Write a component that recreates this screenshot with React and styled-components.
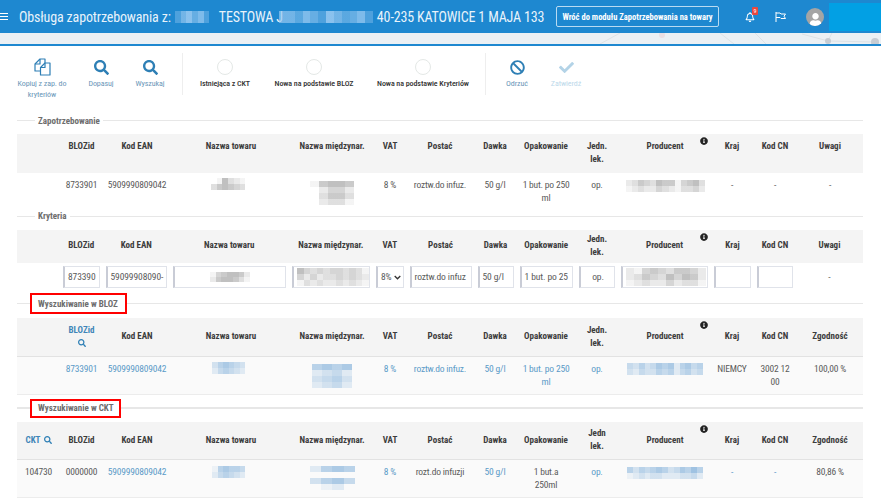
import React from 'react';
import styled, { createGlobalStyle } from 'styled-components';
import { FaSearch, FaBan, FaCheck, FaRegBell, FaInfoCircle, FaUser } from 'react-icons/fa';

const colors = {
    blue: '#1e88d0',
    link: '#5b9ac8',
    icon: '#2e7fb5',
    text: '#5a5a5a',
    head: '#3c3c3c',
    line: '#e7e7e7',
    gray: '#f4f4f4',
};

const GlobalStyle = createGlobalStyle`
    html, body { margin: 0; padding: 0; background: #fff; }
    body {
        font-family: Roboto, "Liberation Sans", sans-serif;
        font-size: 9.5px;
        font-stretch: 85%;
        color: ${colors.text};
        overflow: hidden;
    }
`;

const Page = styled.div`
    width: 881px;
    height: 502px;
    overflow: hidden;
`;

const TopBar = styled.header`
    display: flex;
    align-items: center;
    height: 33px;
    background: ${colors.blue};
    color: #e8f3fb;
`;

const Burger = styled.span`
    flex: none;
    display: block;
    width: 8px;
    height: 5px;
    margin: 0 11px 0 0;
    border-top: 1px solid #fff;
    border-bottom: 1px solid #fff;
    position: relative;
    &::after {
        content: '';
        position: absolute;
        left: 0;
        right: 0;
        top: 2px;
        height: 1px;
        background: #fff;
    }
`;

const Title = styled.div`
    flex: none;
    display: flex;
    align-items: center;
    gap: 4px;
    width: 537px;
    font-size: 14px;
    letter-spacing: -0.15px;
    white-space: nowrap;
`;

const TitleCover = styled.span`
    display: flex;
    margin-left: -8px;
`;

const BackButton = styled.div`
    flex: none;
    box-sizing: border-box;
    width: 163px;
    height: 21px;
    border: 1px solid #b9dbf2;
    border-radius: 2px;
    color: #fff;
    font-weight: 700;
    font-size: 8.5px;
    display: flex;
    align-items: center;
    justify-content: center;
    white-space: nowrap;
`;

const TopIcons = styled.div`
    flex: none;
    display: flex;
    align-items: center;
    gap: 20px;
    margin-left: 26px;
    color: #fff;
    font-size: 10px;
`;

const Bell = styled.span`
    position: relative;
    display: flex;
`;

const Badge = styled.span`
    position: absolute;
    left: 7px;
    top: -5px;
    width: 6px;
    height: 8px;
    border-radius: 1px;
    background: #e8483f;
    color: #fff;
    font-size: 6px;
    line-height: 8px;
    text-align: center;
`;

const Avatar = styled.span`
    width: 18px;
    height: 18px;
    border-radius: 50%;
    background: #a5a5a5;
    color: #fff;
    overflow: hidden;
    display: flex;
    align-items: flex-end;
    justify-content: center;
    font-size: 13px;
`;

const UserBox = styled.div`
    flex: none;
    width: 54px;
    height: 28px;
    margin-left: 5px;
    background: #02a0e4;
`;

const Strip = styled.div`
    height: 11px;
    background: #ebf0f4;
    border-bottom: 2px solid ${colors.blue};
    overflow: hidden;
    svg { display: block; }
`;

const Toolbar = styled.div`
    display: flex;
    align-items: flex-start;
    height: 46px;
    padding: 7px 0 0 0;
    margin-bottom: 15px;
`;

const Tool = styled.div`
    flex: none;
    width: ${p => p.$w}px;
    padding-top: 5px;
    display: flex;
    flex-direction: column;
    align-items: center;
    text-align: center;
    font-size: 8px;
    letter-spacing: -0.08px;
    line-height: 11px;
    color: ${p => p.$dark ? '#333' : p.$faded ? '#bcd8ea' : '#6a96b8'};
    font-weight: ${p => p.$dark ? 500 : 400};
    white-space: pre-line;
`;

const ToolIcon = styled.span`
    height: 18px;
    margin-bottom: 2px;
    display: flex;
    align-items: center;
    font-size: 15px;
    color: ${p => p.$faded ? '#b3d3e7' : colors.icon};
`;

const Ring = styled.span`
    display: block;
    box-sizing: border-box;
    width: 16px;
    height: 16px;
    margin: 1px 0 3px;
    border: 1px solid #e4e8e6;
    border-radius: 50%;
`;

const Divider = styled.span`
    width: 1px;
    height: 42px;
    background: #eee;
    flex: none;
`;

const Sections = styled.main`
    padding: 0 18px 0 17px;
`;

const Legend = styled.div`
    display: flex;
    align-items: center;
    height: ${p => p.$h || 13}px;
    margin-top: ${p => p.$top}px;
    margin-bottom: ${p => p.$boxed ? 4 : 7}px;
    &::before, &::after {
        content: '';
        height: ${p => p.$rule || 1}px;
        background: ${colors.line};
    }
    &::before { width: ${p => p.$boxed ? 13 : 18}px; }
    &::after { flex: 1; }
`;

const LegendText = styled.span`
    box-sizing: border-box;
    font-weight: 700;
    font-size: 9px;
    color: #6d6d6d;
    padding: 0 3px;
    height: 100%;
    display: flex;
    align-items: center;
    white-space: nowrap;
    ${p => p.$boxed && `
        border: 2px solid #f00;
        padding: 0 0 0 6px;
        width: ${p.$boxed}px;
    `}
`;

const Table = styled.table`
    width: 846px;
    border-collapse: collapse;
    table-layout: fixed;
`;

const Th = styled.th`
    box-sizing: border-box;
    position: relative;
    height: ${p => p.$h}px;
    padding: ${p => p.$top ? '6px 3px 0' : '0 3px'};
    background: ${colors.gray};
    border-bottom: 1px solid ${p => p.$ruled ? '#e2e2e2' : colors.gray};
    font-weight: 700;
    font-size: 9px;
    line-height: 13px;
    text-align: center;
    vertical-align: ${p => p.$top ? 'top' : 'middle'};
    color: ${p => p.$link ? '#3f86b8' : colors.head};
`;

const Td = styled.td`
    box-sizing: border-box;
    height: ${p => p.$h}px;
    padding: ${p => p.$pad}px 3px 0;
    background: ${p => p.$tint ? '#fafafa' : '#fff'};
    border-bottom: 1px solid ${p => p.$ruled ? '#ececec' : 'transparent'};
    line-height: 13px;
    letter-spacing: -0.2px;
    text-align: center;
    vertical-align: top;
    color: ${p => p.$link ? colors.link : colors.text};
`;

const InfoMark = styled.span`
    position: absolute;
    right: 3px;
    top: 3px;
    display: flex;
    font-size: 8px;
    color: #222;
`;

const HeadSearch = styled.span`
    display: inline-flex;
    vertical-align: middle;
    color: ${colors.icon};
    font-size: 8px;
    margin-left: ${p => p.$side ? 3 : 0}px;
`;

const InputCell = styled.td`
    box-sizing: border-box;
    height: 25px;
    padding: 3px 3px 0;
    vertical-align: top;
    text-align: center;
    line-height: 22px;
    color: ${colors.text};
`;

const FakeInput = styled.div`
    box-sizing: border-box;
    width: 100%;
    height: 22px;
    padding: 0 2px 0 3px;
    border: 1px solid #e0e3ea;
    border-left: 2px solid #c9ccd6;
    background: #fff;
    overflow: hidden;
    white-space: nowrap;
    display: flex;
    align-items: center;
    justify-content: ${p => p.$center ? 'center' : 'flex-start'};
    font-size: 9.5px;
    letter-spacing: -0.1px;
`;

const Chevron = styled.svg`
    flex: none;
    margin-left: auto;
`;

const MosaicBox = styled.span`
    display: inline-block;
    vertical-align: top;
    filter: blur(0.7px);
`;

const MosaicRow = styled.span`
    display: block;
    width: ${p => p.$w}px;
    height: ${p => p.$h}px;
    background: ${p => {
        const cells = p.$cells.split('');
        const step = 100 / cells.length;
        const tone = p.$tone;
        const stops = cells.map((c, i) => {
            const a = Number(c) / 10;
            const col = `rgba(${tone}, ${a})`;
            return `${col} ${i * step}% ${(i + 1) * step}%`;
        });
        return `linear-gradient(90deg, ${stops.join(', ')})`;
    }};
`;

const Mosaic = ({ w, rows, h = 6, tone = '150,150,150' }) => (
    <MosaicBox>
        {rows.map((cells, i) => <MosaicRow key={i} $w={w} $h={h} $cells={cells} $tone={tone} />)}
    </MosaicBox>
);

const BLUE_TONE = '120,170,215';
const TITLE_TONE = '150,200,240';

const colsMain = [43, 43, 68, 120, 82, 34, 66, 44, 58, 44, 92, 42, 44, 66];
const colsCrit = [43, 42.5, 67.5, 118.5, 84.5, 33.5, 68, 42, 59.5, 42, 93, 43, 42, 67];

const Cols = ({ list }) => (
    <colgroup>
        {list.map((w, i) => <col key={i} style={{ width: w }} />)}
    </colgroup>
);

const CopyIcon = () => (
    <svg width="17" height="18" viewBox="0 0 17 18" fill="none" stroke="currentColor" strokeWidth="1.2" strokeLinejoin="round">
        <path d="M6.5 13H1V6L6 1h5v4" />
        <path d="M6 1v5H1" />
        <path d="M11 5h5v12H6.5V9.5z" />
        <path d="M11 5v4.5H6.5" />
    </svg>
);

const FlagIcon = () => (
    <svg width="11" height="10" viewBox="0 0 11 10" fill="none" stroke="currentColor" strokeWidth="1">
        <path d="M1 0v10" />
        <path d="M1 1h4l1 1h4.5L9 4.2l1.5 2.3H6l-1-1H1" />
    </svg>
);

const StripArt = () => (
    <svg width="881" height="11" viewBox="0 0 881 11" fill="none" stroke="#dde2e6" strokeWidth="1">
        <path d="M755 0l11 11M802 1l26 7M828 8l47 1M828 8l4-8M600 11l20-11M720 0l14 11" />
        <circle cx="662" cy="2" r="3" fill="#eadfe3" stroke="none" />
        <circle cx="828" cy="8" r="3" fill="#c6ccd3" stroke="none" />
        <circle cx="875" cy="9" r="4" fill="#c6ccd3" stroke="none" />
    </svg>
);

const Info = () => <InfoMark><FaInfoCircle /></InfoMark>;

const Head = ({ last, first, h, ruled, top, jedn = 'Jedn.', blozSearch }) => {
    const cell = { $h: h, $ruled: ruled, $top: top };
    return (
        <thead>
            <tr>
                <Th {...cell} $link={first === 'CKT'}>
                    {first === 'CKT' && <>CKT<HeadSearch $side><FaSearch /></HeadSearch></>}
                </Th>
                <Th {...cell} $link={blozSearch}>
                    BLOZid
                    {blozSearch && <><br /><HeadSearch><FaSearch /></HeadSearch></>}
                </Th>
                <Th {...cell}>Kod EAN</Th>
                <Th {...cell}>Nazwa towaru</Th>
                <Th {...cell}>Nazwa międzynar.</Th>
                <Th {...cell}>VAT</Th>
                <Th {...cell}>Postać</Th>
                <Th {...cell}>Dawka</Th>
                <Th {...cell}>Opakowanie</Th>
                <Th {...cell}>{jedn}<br />lek.</Th>
                <Th {...cell}>Producent<Info /></Th>
                <Th {...cell}>Kraj</Th>
                <Th {...cell}>Kod CN</Th>
                <Th {...cell}>{last}</Th>
            </tr>
        </thead>
    );
};

const App = () => (
    <Page>
        <GlobalStyle />
        <TopBar>
            <Burger />
            <Title>
                <span>Obsługa zapotrzebowania z:</span>
                <Mosaic w={40} h={12} tone={TITLE_TONE} rows={['4796840']} />
                <span>TESTOWA J</span>
                <TitleCover><Mosaic w={94} h={12} tone={TITLE_TONE} rows={['775864975684']} /></TitleCover>
                <span>40-235 KATOWICE 1 MAJA 133</span>
            </Title>
            <BackButton>Wróć do modułu Zapotrzebowania na towary</BackButton>
            <TopIcons>
                <Bell><FaRegBell /><Badge>9</Badge></Bell>
                <FlagIcon />
                <Avatar><FaUser /></Avatar>
            </TopIcons>
            <UserBox />
        </TopBar>
        <Strip><StripArt /></Strip>
        <Toolbar>
            <Tool $w={84}><ToolIcon><CopyIcon /></ToolIcon>{'Kopiuj z zap. do\nkryteriów'}</Tool>
            <Tool $w={34}><ToolIcon><FaSearch /></ToolIcon>Dopasuj</Tool>
            <Tool $w={64}><ToolIcon><FaSearch /></ToolIcon>Wyszukaj</Tool>
            <Divider />
            <Tool $w={84} $dark><Ring />Istniejąca z CKT</Tool>
            <Tool $w={94} $dark><Ring />Nowa na podstawie BLOZ</Tool>
            <Tool $w={124} $dark><Ring />Nowa na podstawie Kryteriów</Tool>
            <Divider />
            <Tool $w={62}><ToolIcon><FaBan /></ToolIcon>Odrzuć</Tool>
            <Tool $w={36} $faded><ToolIcon $faded><FaCheck /></ToolIcon>Zatwierdź</Tool>
        </Toolbar>
        <Sections>
            <Legend $top={0}><LegendText>Zapotrzebowanie</LegendText></Legend>
            <Table>
                <Cols list={colsMain} />
                <Head h={38} top last="Uwagi" />
                <tbody>
                    <tr>
                        <Td $h={37} $pad={5} />
                        <Td $pad={5}>8733901</Td>
                        <Td $pad={5}>5909990809042</Td>
                        <Td $pad={5}><Mosaic w={40} rows={['0163210', '3565430']} /></Td>
                        <Td $pad={8}><Mosaic w={44} rows={['15665', '02442', '03553', '02331']} /></Td>
                        <Td $pad={5}>8 %</Td>
                        <Td $pad={5}>roztw.do infuz.</Td>
                        <Td $pad={5}>50 g/l</Td>
                        <Td $pad={5}>1 but. po 250 ml</Td>
                        <Td $pad={5}>op.</Td>
                        <Td $pad={7}><Mosaic w={79} rows={['2354365514563', '1232243213342']} /></Td>
                        <Td $pad={5}>-</Td>
                        <Td $pad={5}>-</Td>
                        <Td $pad={5}>-</Td>
                    </tr>
                </tbody>
            </Table>
            <Legend $top={0}><LegendText>Kryteria</LegendText></Legend>
            <Table>
                <Cols list={colsCrit} />
                <Head h={33} last="Uwagi" />
                <tbody>
                    <tr>
                        <InputCell />
                        <InputCell><FakeInput>873390</FakeInput></InputCell>
                        <InputCell><FakeInput>59099908090-</FakeInput></InputCell>
                        <InputCell><FakeInput $center><Mosaic w={40} h={5} rows={['1456652', '2566531']} /></FakeInput></InputCell>
                        <InputCell><FakeInput><Mosaic w={72} h={6} rows={['64343443431', '42423343432', '13232232321']} /></FakeInput></InputCell>
                        <InputCell>
                            <FakeInput>8%
                                <Chevron width="7" height="5" viewBox="0 0 7 5"><path d="M.7 1l2.8 2.8L6.3 1" fill="none" stroke="#333" strokeWidth="1.3" /></Chevron>
                            </FakeInput>
                        </InputCell>
                        <InputCell><FakeInput>roztw.do infuz</FakeInput></InputCell>
                        <InputCell><FakeInput>50 g/l</FakeInput></InputCell>
                        <InputCell><FakeInput>1 but. po 25</FakeInput></InputCell>
                        <InputCell><FakeInput $center>op.</FakeInput></InputCell>
                        <InputCell><FakeInput><Mosaic w={80} h={6} rows={['2145435542', '2354364652', '1232242331']} /></FakeInput></InputCell>
                        <InputCell><FakeInput /></InputCell>
                        <InputCell><FakeInput /></InputCell>
                        <InputCell>-</InputCell>
                    </tr>
                </tbody>
            </Table>
            <Legend $top={5} $h={21} $boxed><LegendText $boxed={97}>Wyszukiwanie w BLOZ</LegendText></Legend>
            <Table>
                <Cols list={colsMain} />
                <Head h={38} ruled last="Zgodność" blozSearch />
                <tbody>
                    <tr>
                        <Td $h={38} $pad={5} $tint $ruled />
                        <Td $pad={5} $tint $ruled $link>8733901</Td>
                        <Td $pad={5} $tint $ruled $link>5909990809042</Td>
                        <Td $pad={5} $tint $ruled><Mosaic w={39} tone={BLUE_TONE} rows={['3565430', '2454320']} /></Td>
                        <Td $pad={7} $tint $ruled><Mosaic w={40} tone={BLUE_TONE} rows={['5656', '2342', '3453', '2342']} /></Td>
                        <Td $pad={5} $tint $ruled $link>8 %</Td>
                        <Td $pad={5} $tint $ruled $link>roztw.do infuz.</Td>
                        <Td $pad={5} $tint $ruled $link>50 g/l</Td>
                        <Td $pad={5} $tint $ruled $link>1 but. po 250 ml</Td>
                        <Td $pad={5} $tint $ruled $link>op.</Td>
                        <Td $pad={6} $tint $ruled><Mosaic w={76} tone={BLUE_TONE} rows={['4353465625645', '3243354524534']} /></Td>
                        <Td $pad={5} $tint $ruled>NIEMCY</Td>
                        <Td $pad={5} $tint $ruled>3002 12 00</Td>
                        <Td $pad={5} $tint $ruled>100,00 %</Td>
                    </tr>
                </tbody>
            </Table>
            <Legend $top={4} $h={19} $rule={2} $boxed><LegendText $boxed={91}>Wyszukiwanie w CKT</LegendText></Legend>
            <Table>
                <Cols list={colsMain} />
                <Head h={38} ruled last="Zgodność" first="CKT" jedn="Jedn" />
                <tbody>
                    <tr>
                        <Td $h={38} $pad={5} $tint $ruled>104730</Td>
                        <Td $pad={5} $tint $ruled>0000000</Td>
                        <Td $pad={5} $tint $ruled $link>5909990809042</Td>
                        <Td $pad={6} $tint $ruled><Mosaic w={39} tone={BLUE_TONE} rows={['1565540', '2454320']} /></Td>
                        <Td $pad={6} $tint $ruled><Mosaic w={45} tone={BLUE_TONE} rows={['2565', '0000', '3564', '0120']} /></Td>
                        <Td $pad={5} $tint $ruled $link>8 %</Td>
                        <Td $pad={5} $tint $ruled>rozt.do infuzji</Td>
                        <Td $pad={5} $tint $ruled $link>50 g/l</Td>
                        <Td $pad={5} $tint $ruled>1 but.a<br />250ml</Td>
                        <Td $pad={5} $tint $ruled $link>op.</Td>
                        <Td $pad={7} $tint $ruled><Mosaic w={76} tone={BLUE_TONE} rows={['5354565346575', '1232332223342']} /></Td>
                        <Td $pad={5} $tint $ruled $link>-</Td>
                        <Td $pad={5} $tint $ruled $link>-</Td>
                        <Td $pad={5} $tint $ruled>80,86 %</Td>
                    </tr>
                </tbody>
            </Table>
        </Sections>
    </Page>
);

export default App;
